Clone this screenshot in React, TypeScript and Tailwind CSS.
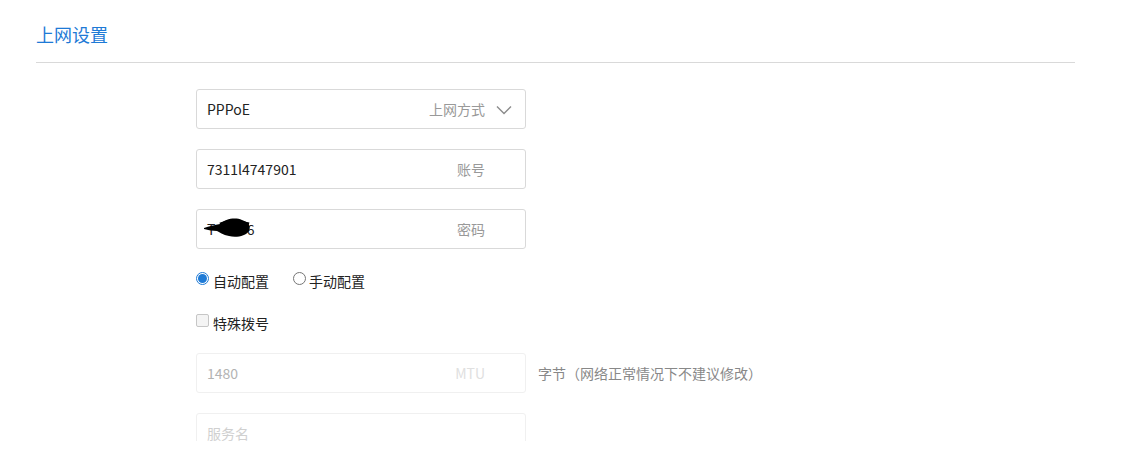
import { useState } from "react";

const FONT = { fontFamily: '"Noto Sans CJK SC", "Noto Sans", "Liberation Sans", sans-serif' };

function Field({
  value,
  label,
  placeholder,
  disabled,
  select,
  children,
}: {
  value?: string;
  label?: string;
  placeholder?: string;
  disabled?: boolean;
  select?: boolean;
  children?: React.ReactNode;
}) {
  return (
    <div
      className={`relative flex h-[40px] w-[330px] items-center rounded-[3px] border pl-[10px] pr-[40px] text-[14px] ${
        disabled ? "border-[#f0f0f0] text-[#b3b3b3]" : "border-[#d9d9d9] text-[#222]"
      }`}
    >
      <span className={`flex-1 whitespace-pre ${placeholder ? "text-[#d0d0d0]" : ""}`}>
        {value ?? placeholder}
      </span>
      {children}
      {label && (
        <span className={disabled ? "text-[#e0e0e0]" : "text-[#999]"}>{label}</span>
      )}
      {select && (
        <svg
          className="absolute right-[13px] top-[15px]"
          width="16"
          height="10"
          viewBox="0 0 16 10"
          fill="none"
          stroke="#8c8c8c"
          strokeWidth="1.4"
        >
          <path d="M1 1.5 L8 8.5 L15 1.5" />
        </svg>
      )}
    </div>
  );
}

export default function App() {
  const [mode, setMode] = useState<"auto" | "manual">("auto");

  return (
    <div className="h-[441px] overflow-hidden bg-white" style={FONT}>
      <div className="pl-[36px] pr-[60px] pt-[22px]">
        <div className="border-b border-[#d9d9d9] pb-[15px] text-[18px] leading-[25px] text-[#1e7ad6]">
          上网设置
        </div>
        <div className="ml-[160px] pt-[26px]">
          <div className="flex flex-col gap-[20px]">
            <Field value="PPPoE" label="上网方式" select />
            <Field value="7311l4747901" label="账号" />
            <Field label="密码" value="T          6">
              <svg
                className="absolute left-[6px] top-[4px]"
                width="50"
                height="28"
                viewBox="0 0 50 28"
              >
                <path
                  d="M1 14 C6 12 12 11 17 10 C22 5 32 3 39 6 C46 8 48 13 46 17 C43 22 33 24 26 22 C20 21 16 18 14 17 C10 17 5 16 1 15 Z"
                  fill="#000"
                />
                <path d="M17 10 C26 6 36 7 46 10" stroke="#000" strokeWidth="3" fill="none" />
              </svg>
            </Field>
          </div>

          <div className="mt-[21px] flex h-[20px] items-center text-[14px] text-[#222]">
            <label className="flex items-center" onClick={() => setMode("auto")}>
              <span
                className={`mt-[-3px] flex h-[13px] w-[13px] items-center justify-center rounded-full border ${
                  mode === "auto" ? "border-[#1e7ad6]" : "border-[#767676]"
                }`}
              >
                {mode === "auto" && <span className="h-[9px] w-[9px] rounded-full bg-[#1e7ad6]" />}
              </span>
              <span className="ml-[4px] pt-[3px]">自动配置</span>
            </label>
            <label className="ml-[24px] flex items-center" onClick={() => setMode("manual")}>
              <span
                className={`mt-[-3px] flex h-[13px] w-[13px] items-center justify-center rounded-full border ${
                  mode === "manual" ? "border-[#1e7ad6]" : "border-[#767676]"
                }`}
              >
                {mode === "manual" && <span className="h-[9px] w-[9px] rounded-full bg-[#1e7ad6]" />}
              </span>
              <span className="ml-[3px] pt-[3px]">手动配置</span>
            </label>
          </div>

          <div className="mt-[22px] flex h-[20px] items-center text-[14px] text-[#222]">
            <span className="mt-[-3px] h-[13px] w-[13px] rounded-[2px] border border-[#c6c6c6] bg-[#f4f4f4]" />
            <span className="ml-[4px] pt-[3px]">特殊拨号</span>
          </div>

          <div className="mt-[21px] flex items-center">
            <Field value="1480" label="MTU" disabled />
            <span className="ml-[12px] text-[14px] text-[#888]">字节（网络正常情况下不建议修改）</span>
          </div>

          <div className="mt-[20px]">
            <Field placeholder="服务名" disabled />
          </div>
        </div>
      </div>
    </div>
  );
}
